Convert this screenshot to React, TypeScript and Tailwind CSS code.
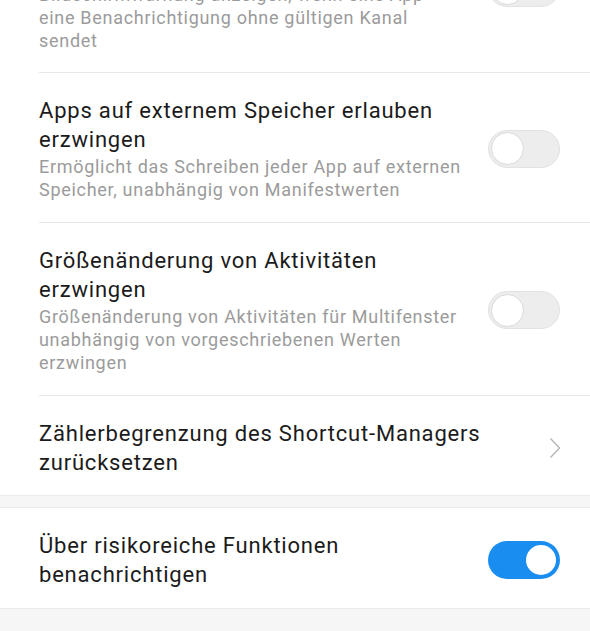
import React from "react";

function Toggle({ on }: { on: boolean }) {
  if (on) {
    return (
      <div className="shrink-0 w-[72px] h-[38px] rounded-full bg-[#1a8df0] flex items-center justify-end pr-[2px]">
        <div className="w-[34px] h-[34px] rounded-full bg-white border-[2px] border-[#1a8df0]" />
      </div>
    );
  }
  return (
    <div className="shrink-0 w-[72px] h-[38px] rounded-full bg-[#ededed] border border-[#e2e2e2] flex items-center justify-start pl-[2px]">
      <div className="w-[33px] h-[33px] rounded-full bg-white border-[1.5px] border-[#d9d9d9]" />
    </div>
  );
}

function Lines({ lines, className }: { lines: string[]; className: string }) {
  return (
    <div className={className}>
      {lines.map((l, i) => (
        <div key={i} className="whitespace-nowrap">
          {l}
        </div>
      ))}
    </div>
  );
}

function Row({
  title,
  sub,
  right,
  className,
}: {
  title: string[];
  sub?: string[];
  right: React.ReactNode;
  className: string;
}) {
  return (
    <div className={`ml-[39px] pr-[30px] flex items-center ${className}`}>
      <div className="flex-1 min-w-0 flex flex-col gap-[1px]">
        <Lines lines={title} className="text-[22px] leading-[29px] tracking-[0.8px] text-[#1b1b1b]" />
        {sub && <Lines lines={sub} className="text-[18px] leading-[23px] tracking-[0.7px] text-[#9b9b9b]" />}
      </div>
      {right}
    </div>
  );
}

function Chevron() {
  return (
    <svg width="12" height="22" viewBox="0 0 12 22" className="shrink-0 mr-[-1px]">
      <polyline points="1.5,1.5 10.5,11 1.5,20.5" fill="none" stroke="#b5b5b5" strokeWidth="1.4" />
    </svg>
  );
}

export default function App() {
  return (
    <div
      className="w-[590px] h-[631px] overflow-hidden bg-white flex flex-col"
      style={{ fontFamily: "Roboto, 'Noto Sans', sans-serif" }}
    >
      <Row
        className="mt-[-99px] pt-[23px] pb-[20px] border-b border-[#e8e8e8]"
        title={["Warnungen zu Benachrichtigungs-", "kanälen anzeigen"]}
        sub={[
          "Bildschirmwarnung anzeigen, wenn eine App",
          "eine Benachrichtigung ohne gültigen Kanal",
          "sendet",
        ]}
        right={<Toggle on={false} />}
      />
      <Row
        className="pt-[23px] pb-[21px] border-b border-[#e8e8e8]"
        title={["Apps auf externem Speicher erlauben", "erzwingen"]}
        sub={[
          "Ermöglicht das Schreiben jeder App auf externen",
          "Speicher, unabhängig von Manifestwerten",
        ]}
        right={<Toggle on={false} />}
      />
      <Row
        className="pt-[23px] pb-[21px] border-b border-[#e8e8e8]"
        title={["Größenänderung von Aktivitäten", "erzwingen"]}
        sub={[
          "Größenänderung von Aktivitäten für Multifenster",
          "unabhängig von vorgeschriebenen Werten",
          "erzwingen",
        ]}
        right={<Toggle on={false} />}
      />
      <Row
        className="pt-[23px] pb-[18px]"
        title={["Zählerbegrenzung des Shortcut-Managers", "zurücksetzen"]}
        right={<Chevron />}
      />
      <div className="h-[13px] bg-[#f6f6f6] border-y border-[#ebebeb]" />
      <Row
        className="pt-[23px] pb-[19px]"
        title={["Über risikoreiche Funktionen", "benachrichtigen"]}
        right={<Toggle on={true} />}
      />
      <div className="flex-1 bg-[#f6f6f6] border-t border-[#ebebeb]" />
    </div>
  );
}
